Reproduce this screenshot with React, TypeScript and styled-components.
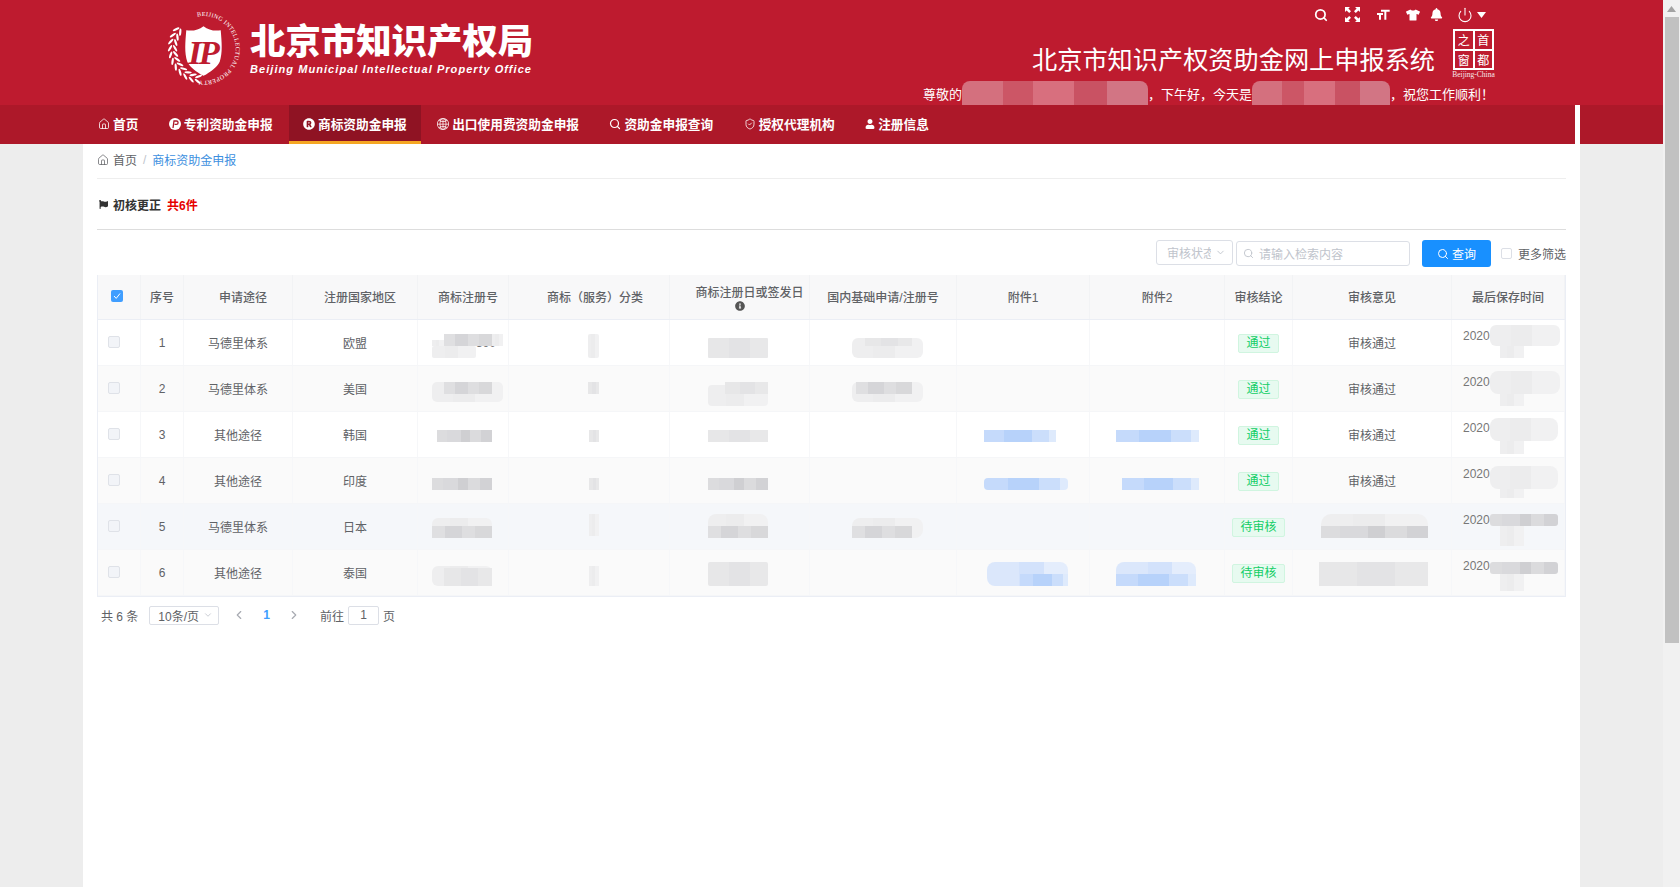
import React from "react";
import styled, { createGlobalStyle, css } from "styled-components";
import { Home, Search, ShieldCheck, Power, ChevronDown, ChevronLeft, ChevronRight } from "lucide-react";
import { FaRegistered, FaUser, FaTshirt, FaBell, FaFlag, FaInfoCircle } from "react-icons/fa";
import { MdFormatSize } from "react-icons/md";
import { BsGlobe2 } from "react-icons/bs";

const RED = "#be1b2f";
const NAV_RED = "#ad1829";
const SANS = `"Liberation Sans", "Noto Sans CJK SC", sans-serif`;

const GlobalStyle = createGlobalStyle`
  html, body {
    margin: 0;
    padding: 0;
    overflow: hidden;
    background: #ededed;
    font-family: ${SANS};
  }
`;

const Screen = styled.div`
  display: flex;
  width: 1680px;
  height: 887px;
  overflow: hidden;
`;

const Page = styled.div`
  flex: 1;
  display: flex;
  flex-direction: column;
  min-width: 0;
`;

const ScrollTrack = styled.div`
  width: 17px;
  display: flex;
  flex-direction: column;
  background: #f1f1f1;
`;

const ScrollArrow = styled.div`
  height: 17px;
  display: flex;
  align-items: center;
  justify-content: center;
`;

const ScrollThumb = styled.div`
  height: 626px;
  margin: 0 1px 0 2px;
  background: #c1c1c1;
`;

const TopBar = styled.header`
  height: 105px;
  flex: none;
  background: ${RED};
  display: flex;
  justify-content: space-between;
  overflow: hidden;
  color: #fff;
  padding: 0 166px;
`;

const Brand = styled.div`
  display: flex;
  gap: 9px;
  padding-top: 11px;
`;

const BrandText = styled.div`
  width: 284px;
  display: flex;
  flex-direction: column;
  padding-top: 9px;
`;

const BrandTitle = styled.div`
  font-family: "Noto Sans CJK SC", sans-serif;
  font-size: 35.4px;
  font-weight: 900;
  line-height: 38px;
  white-space: nowrap;
`;

const BrandSub = styled.div`
  font-size: 11px;
  font-weight: 700;
  font-style: italic;
  letter-spacing: 1.06px;
  line-height: 14px;
  margin-top: 4px;
  white-space: nowrap;
`;

const TopRight = styled.div`
  display: flex;
  flex-direction: column;
  align-items: flex-end;
`;

const ToolIcons = styled.div`
  height: 29px;
  display: flex;
  align-items: center;
  gap: 15px;
  padding-right: 11px;
`;

const ToolSlot = styled.span<{ $w: number; $nudge?: number }>`
  width: ${(p) => p.$w}px;
  margin-left: ${(p) => p.$nudge ?? 0}px;
  display: flex;
  justify-content: center;
`;

const SystemRow = styled.div`
  height: 52px;
  display: flex;
  gap: 16px;
`;

const SystemTitle = styled.div`
  font-family: "Noto Sans CJK SC", sans-serif;
  font-size: 25.2px;
  font-weight: 400;
  line-height: 58px;
  white-space: nowrap;
`;

const SealColumn = styled.div`
  width: 45px;
  display: flex;
  flex-direction: column;
  align-items: center;
  margin-right: 1px;
`;

const Seal = styled.div`
  width: 41px;
  height: 41px;
  box-sizing: border-box;
  border: 2px solid #fff;
  display: grid;
  grid-template-columns: 1fr 1fr;
  grid-template-rows: 1fr 1fr;
  gap: 2px;
  background: #fff;
`;

const SealCell = styled.span`
  background: ${RED};
  font-family: "Noto Sans CJK SC", sans-serif;
  font-size: 12px;
  line-height: 17px;
  text-align: center;
  overflow: hidden;
`;

const SealCaption = styled.div`
  font-family: "Liberation Serif", serif;
  font-size: 7.5px;
  line-height: 10px;
  white-space: nowrap;
  opacity: 0.9;
`;

const Greeting = styled.div`
  height: 24px;
  margin-right: 3px;
  font-family: "Noto Sans CJK SC", sans-serif;
  font-size: 13px;
  line-height: 26px;
  display: flex;
  white-space: nowrap;
`;

const GreetBlur = styled.span<{ $w: number }>`
  width: ${(p) => p.$w}px;
  height: 24px;
  flex: none;
  border-radius: 8px 8px 0 0;
  background: linear-gradient(
    90deg,
    #d4707e 0 22%,
    #cc5666 22% 38%,
    #d86f7e 38% 60%,
    #c95263 60% 78%,
    #d27584 78%
  );
`;

const NavBar = styled.nav`
  height: 39px;
  flex: none;
  display: flex;
`;

const NavStrip = styled.div`
  flex: 1;
  background: ${NAV_RED};
  display: flex;
  gap: 2.4px;
  padding-left: 84px;
`;

const NavGap = styled.div`
  width: 5px;
  background: #fff;
`;

const NavTail = styled.div`
  width: 83px;
  background: ${NAV_RED};
`;

const NavItem = styled.a<{ $active?: boolean }>`
  box-sizing: border-box;
  height: 39px;
  display: flex;
  align-items: center;
  gap: 3px;
  padding: 0 14px 2px;
  color: #fff;
  font-family: "Noto Sans CJK SC", sans-serif;
  font-size: 12.7px;
  font-weight: 700;
  white-space: nowrap;
  ${(p) =>
    p.$active &&
    css`
      background: #8f1323;
      border-bottom: 3px solid #f5a623;
      padding-top: 1px;
      padding-bottom: 0;
    `}
`;

const Body = styled.div`
  flex: 1;
  display: flex;
  min-height: 0;
`;

const Gutter = styled.div`
  width: 83px;
  flex: none;
  background: #ededed;
`;

const Content = styled.main`
  flex: 1;
  background: #fff;
  padding: 0 14px;
  min-width: 0;
`;

const Breadcrumb = styled.div`
  height: 35px;
  box-sizing: border-box;
  border-bottom: 1px solid #eeeeee;
  display: flex;
  align-items: center;
  font-size: 12px;
  color: #606266;
  padding-bottom: 3px;
`;

const CrumbHome = styled.span`
  display: flex;
  align-items: center;
  gap: 4px;
`;

const CrumbSep = styled.span`
  margin: 0 6px;
  color: #c0c4cc;
`;

const CrumbLink = styled.span`
  color: #3d8fe0;
`;

const SectionHead = styled.div`
  height: 51px;
  box-sizing: border-box;
  border-bottom: 1px solid #dddddd;
  display: flex;
  align-items: center;
  gap: 5px;
  font-size: 12px;
  padding: 1px 0 0 2px;
  color: #333;
`;

const SectionName = styled.span`
  font-weight: 700;
`;

const SectionCount = styled.span`
  color: #e60000;
  font-weight: 700;
  margin-left: 1px;
`;

const Toolbar = styled.div`
  height: 45px;
  box-sizing: border-box;
  padding-top: 10px;
  display: flex;
  justify-content: flex-end;
  align-items: flex-start;
`;

const SelectBox = styled.div`
  box-sizing: border-box;
  width: 77px;
  height: 25px;
  border: 1px solid #dcdfe6;
  border-radius: 3px;
  display: flex;
  align-items: center;
  padding: 0 6px 0 10px;
  color: #c0c4cc;
  font-size: 12px;
  gap: 4px;
`;

const SelectText = styled.span`
  width: 44px;
  overflow: hidden;
  white-space: nowrap;
`;

const SearchBox = styled.div`
  box-sizing: border-box;
  width: 174px;
  height: 25px;
  margin: 1px 12px 0 3px;
  border: 1px solid #dcdfe6;
  border-radius: 3px;
  display: flex;
  align-items: center;
  gap: 5px;
  padding-left: 6px;
  color: #c0c4cc;
  font-size: 12px;
`;

const QueryButton = styled.button`
  box-sizing: border-box;
  width: 69px;
  height: 27px;
  border: 0;
  border-radius: 3px;
  background: #1890ff;
  color: #fff;
  font-family: ${SANS};
  font-size: 12px;
  display: flex;
  align-items: center;
  justify-content: center;
  gap: 3px;
  padding: 0;
`;

const FilterToggle = styled.label`
  margin-left: 10px;
  height: 27px;
  display: flex;
  align-items: center;
  gap: 6px;
  font-size: 12px;
  color: #606266;
  white-space: nowrap;
`;

const Box = styled.span`
  box-sizing: border-box;
  width: 11px;
  height: 11px;
  border: 1px solid #dcdfe6;
  border-radius: 2px;
  display: block;
`;

const TableWrap = styled.div`
  border-left: 1px solid #ebeef5;
  border-right: 1px solid #ebeef5;
  border-bottom: 1px solid #ebeef5;
  box-sizing: border-box;
  margin: 0;
`;

const COLS = "43px 43px 109px 125px 91px 161px 140px 147px 133px 135px 68px 159px 113px";

const HeadRow = styled.div`
  display: grid;
  grid-template-columns: ${COLS};
  height: 45px;
  box-sizing: border-box;
  background: #f8f8f9;
  border-bottom: 1px solid #ebeef5;
  color: #606266;
  font-size: 12px;
  font-weight: 500;
`;

const HeadCell = styled.div<{ $shift?: number }>`
  display: flex;
  flex-direction: column;
  align-items: center;
  justify-content: center;
  border-right: 1px solid #f2f3f5;
  padding-top: 3px;
  padding-left: ${(p) => p.$shift ?? 0}px;
  line-height: 15px;
  white-space: nowrap;
`;

const HeadLine = styled.span`
  margin-left: 20px;
`;

const Row = styled.div<{ $bg: string }>`
  position: relative;
  display: grid;
  grid-template-columns: ${COLS};
  height: 46px;
  background: ${(p) => p.$bg};
  border-bottom: 1px solid #f5f6f8;
  box-sizing: border-box;
  color: #606266;
  font-size: 12px;
`;

const Cell = styled.div`
  display: flex;
  align-items: center;
  justify-content: center;
  border-right: 1px solid #f6f7f9;
  white-space: nowrap;
`;

const CheckCell = styled(Cell)`
  padding: 0 10px 2px 0;
`;

const Disabled = styled(Box)`
  width: 12px;
  height: 12px;
  background: #f2f4f8;
  border-color: #dfe2e8;
`;

const Checked = styled.span`
  box-sizing: border-box;
  width: 12px;
  height: 12px;
  margin-top: -5px;
  margin-right: 4px;
  border-radius: 2px;
  background: #409eff;
  display: flex;
  align-items: center;
  justify-content: center;
`;

const NumberTail = styled(Cell)`
  justify-content: flex-end;
  padding-right: 12px;
  color: #777;
`;

const TimeCell = styled(Cell)`
  justify-content: flex-start;
  align-items: flex-start;
  padding: 8px 0 0 11px;
  line-height: 17px;
  color: #777;
`;

const Tag = styled.span`
  box-sizing: border-box;
  height: 19px;
  line-height: 17px;
  margin-top: 1px;
  padding: 0 7px;
  border: 1px solid #d0f5e0;
  border-radius: 2px;
  background: #e7faf0;
  color: #13ce66;
`;

const TONES: Record<string, string> = {
  grey: "linear-gradient(90deg,#dfdfe1 0 22%,#d5d5d8 22% 50%,#dedee0 50% 72%,#d8d8da 72%)",
  dark: "linear-gradient(90deg,#dcdcde 0 18%,#d9d9dc 18% 44%,#cfcfd2 44% 60%,#dbdbdd 60% 80%,#d2d2d5 80%)",
  soft: "linear-gradient(90deg,#e7e7e8 0 35%,#e3e3e5 35% 70%,#e8e8e9 70%)",
  pale: "linear-gradient(90deg,#eeeeef 0 30%,#ececed 30% 60%,#f1f1f2 60%)",
  blue: "linear-gradient(90deg,#c5dafb 0 28%,#b7d2fa 28% 66%,#cbdefb 66% 90%,#deeafc 90%)",
  sky: "linear-gradient(90deg,#dbe7fb 0 40%,#d3e2fb 40% 70%,#e4edfc 70%)",
};

// mosaic patches laid over the redacted values
const Smudge = styled.span<{ $x: number; $y: number; $w: number; $h: number; $tone: string; $round?: number }>`
  position: absolute;
  left: ${(p) => p.$x}px;
  top: ${(p) => p.$y}px;
  width: ${(p) => p.$w}px;
  height: ${(p) => p.$h}px;
  background: ${(p) => TONES[p.$tone]};
  border-radius: ${(p) => p.$round ?? 2}px;
`;

const Pager = styled.div`
  height: 20px;
  margin-top: 8px;
  padding-left: 4px;
  display: flex;
  align-items: center;
  font-size: 12px;
  color: #606266;
`;

const PageSize = styled.div`
  box-sizing: border-box;
  width: 70px;
  height: 19px;
  margin-left: 11px;
  border: 1px solid #dcdfe6;
  border-radius: 2px;
  display: flex;
  align-items: center;
  justify-content: space-between;
  padding: 0 5px 0 8px;
`;

const PageArrow = styled.span<{ $gap: number }>`
  display: flex;
  margin-left: ${(p) => p.$gap}px;
`;

const PageNo = styled.span`
  color: #409eff;
  font-weight: 700;
  margin-left: 17px;
`;

const Jump = styled.div`
  box-sizing: border-box;
  width: 31px;
  height: 19px;
  margin: 0 4px 0 4px;
  border: 1px solid #dcdfe6;
  border-radius: 2px;
  text-align: center;
  line-height: 17px;
`;

const JumpLabel = styled.span`
  margin-left: 19px;
`;

const NAV = [
  { label: "首页", icon: <Home size={12} strokeWidth={1.6} /> },
  { label: "专利资助金申报", icon: <PatentMark /> },
  { label: "商标资助金申报", icon: <FaRegistered size={12} />, active: true },
  { label: "出口使用费资助金申报", icon: <BsGlobe2 size={12} /> },
  { label: "资助金申报查询", icon: <Search size={12} strokeWidth={2.4} /> },
  { label: "授权代理机构", icon: <ShieldCheck size={12} strokeWidth={1.6} /> },
  { label: "注册信息", icon: <FaUser size={10} /> },
];

const HEADERS: { label: string; shift?: number }[] = [
  { label: "序号" },
  { label: "申请途径", shift: 10 },
  { label: "注册国家地区", shift: 10 },
  { label: "商标注册号", shift: 10 },
  { label: "商标（服务）分类", shift: 12 },
];

const HEADERS_TAIL = ["国内基础申请/注册号", "附件1", "附件2", "审核结论", "审核意见", "最后保存时间"];

type Patch = [number, number, number, number, string, number?];

const ROWS: {
  no: number;
  route: string;
  region: string;
  tail?: string;
  tag: string;
  opinion?: string;
  time: string;
  bg: string;
  patches: Patch[];
}[] = [
  {
    no: 1,
    route: "马德里体系",
    region: "欧盟",
    tail: "390",
    tag: "通过",
    opinion: "审核通过",
    time: "2020",
    bg: "#ffffff",
    patches: [
      [432, 345, 476, 357, "pale"],
      [432, 339, 444, 345, "pale", 0],
      [444, 333, 492, 345, "grey", 0],
      [492, 333, 503, 345, "pale", 0],
      [588, 333, 599, 357, "pale"],
      [708, 337, 768, 357, "soft", 1],
      [852, 337, 923, 357, "pale", 6],
      [865, 337, 912, 345, "soft", 0],
      [1490, 324, 1560, 345, "pale", 6],
      [1500, 345, 1524, 357, "pale", 0],
    ],
  },
  {
    no: 2,
    route: "马德里体系",
    region: "美国",
    tag: "通过",
    opinion: "审核通过",
    time: "2020-",
    bg: "#fafafa",
    patches: [
      [432, 381, 503, 401, "pale", 5],
      [444, 381, 492, 393, "grey", 0],
      [588, 381, 599, 393, "soft", 0],
      [708, 384, 768, 405, "pale", 4],
      [725, 381, 768, 393, "soft", 0],
      [852, 381, 923, 401, "pale", 6],
      [856, 381, 912, 393, "grey", 0],
      [1490, 370, 1560, 393, "pale", 8],
      [1500, 393, 1524, 405, "pale", 0],
    ],
  },
  {
    no: 3,
    route: "其他途径",
    region: "韩国",
    tag: "通过",
    opinion: "审核通过",
    time: "2020-",
    bg: "#ffffff",
    patches: [
      [437, 429, 492, 441, "dark", 0],
      [589, 429, 599, 441, "soft", 0],
      [708, 429, 768, 441, "soft", 0],
      [984, 429, 1056, 441, "blue", 0],
      [1116, 429, 1199, 441, "blue", 0],
      [1490, 417, 1558, 440, "pale", 8],
      [1500, 440, 1524, 453, "pale", 0],
    ],
  },
  {
    no: 4,
    route: "其他途径",
    region: "印度",
    tag: "通过",
    opinion: "审核通过",
    time: "2020",
    bg: "#fafafa",
    patches: [
      [432, 477, 492, 489, "dark", 0],
      [589, 477, 599, 489, "soft", 0],
      [708, 477, 768, 489, "dark", 0],
      [984, 477, 1068, 489, "blue", 4],
      [1122, 477, 1199, 489, "blue", 0],
      [1490, 465, 1558, 488, "pale", 8],
      [1500, 488, 1524, 497, "pale", 0],
    ],
  },
  {
    no: 5,
    route: "马德里体系",
    region: "日本",
    tag: "待审核",
    time: "2020-",
    bg: "#f5f7fa",
    patches: [
      [432, 517, 492, 537, "pale", 6],
      [432, 525, 492, 537, "grey", 0],
      [589, 513, 599, 535, "pale", 0],
      [708, 513, 768, 537, "pale", 8],
      [708, 525, 768, 537, "grey", 0],
      [852, 517, 923, 537, "pale", 8],
      [852, 525, 912, 537, "grey", 0],
      [1321, 513, 1428, 537, "pale", 10],
      [1321, 525, 1428, 537, "dark", 0],
      [1490, 513, 1558, 525, "dark", 3],
      [1500, 525, 1524, 545, "pale", 0],
    ],
  },
  {
    no: 6,
    route: "其他途径",
    region: "泰国",
    tag: "待审核",
    time: "2020-",
    bg: "#fafafa",
    patches: [
      [432, 565, 492, 585, "pale", 6],
      [444, 567, 492, 585, "soft", 0],
      [589, 565, 599, 585, "pale", 0],
      [708, 561, 768, 585, "soft", 2],
      [987, 561, 1068, 585, "sky", 8],
      [1020, 573, 1068, 585, "blue", 0],
      [1116, 561, 1196, 585, "sky", 8],
      [1116, 573, 1196, 585, "blue", 0],
      [1319, 561, 1428, 585, "soft", 0],
      [1490, 561, 1558, 573, "dark", 3],
      [1500, 573, 1524, 590, "pale", 0],
    ],
  },
];

const ROW_TOP = 319;
const TABLE_LEFT = 98;

function PatentMark() {
  return (
    <svg width="12" height="12" viewBox="0 0 12 12">
      <circle cx="6" cy="6" r="6" fill="#fff" />
      <path d="M4 10 5 3h2.4a1.7 1.7 0 0 1 0 3.4H5.6" fill="none" stroke={NAV_RED} strokeWidth="1.3" />
    </svg>
  );
}

function ExpandMark() {
  const arrow = "M0 0h5L3.4 1.6 6 4.2 4.2 6 1.6 3.4 0 5z";
  return (
    <svg width="15" height="15" viewBox="0 0 15 15" fill="#fff">
      <path d={arrow} />
      <path d={arrow} transform="rotate(90 7.5 7.5)" />
      <path d={arrow} transform="rotate(180 7.5 7.5)" />
      <path d={arrow} transform="rotate(270 7.5 7.5)" />
    </svg>
  );
}

function Emblem() {
  const leaves = Array.from({ length: 22 }, (_, i) => {
    const deg = 100 + Math.floor(i / 2) * 11.5;
    const rad = (deg * Math.PI) / 180;
    const outer = i % 2 === 0;
    const radius = outer ? 33 : 28;
    return {
      x: 37 + radius * Math.cos(rad),
      y: 37 + radius * Math.sin(rad),
      r: deg + (outer ? 120 : 60),
    };
  });
  return (
    <svg width="75" height="75" viewBox="0 0 74 74">
      <defs>
        <path id="ring" d="M 31 5.5 A 32 32 0 1 1 29 68" fill="none" />
      </defs>
      <text fontFamily="Liberation Serif, serif" fontSize="6" fill="#fff" letterSpacing="0.35">
        <textPath href="#ring">BEIJING INTELLECTUAL PROPERTY</textPath>
      </text>
      {leaves.map((l, i) => (
        <ellipse key={i} cx={l.x} cy={l.y} rx="3.6" ry="1.1" fill="#fff" transform={`rotate(${l.r} ${l.x} ${l.y})`} />
      ))}
      <path
        d="M37 15c5 4 11 5 17 4 1 12 2 22-1 31-3 6-9 10-16 14-7-4-13-8-16-14-3-9-2-19-1-31 6 1 12 0 17-4z"
        fill="#fff"
      />
      <text
        x="36"
        y="52"
        textAnchor="middle"
        fontFamily="Liberation Serif, serif"
        fontSize="34"
        fontStyle="italic"
        fontWeight="700"
        letterSpacing="-3"
        fill={RED}
      >
        IP
      </text>
    </svg>
  );
}

export default function App() {
  return (
    <Screen>
      <GlobalStyle />
      <Page>
        <TopBar>
          <Brand>
            <Emblem />
            <BrandText>
              <BrandTitle>北京市知识产权局</BrandTitle>
              <BrandSub>Beijing Municipal Intellectual Property Office</BrandSub>
            </BrandText>
          </Brand>
          <TopRight>
            <ToolIcons>
              <ToolSlot $w={16}>
                <Search size={14} strokeWidth={3} />
              </ToolSlot>
              <ToolSlot $w={16}>
                <ExpandMark />
              </ToolSlot>
              <ToolSlot $w={16}>
                <MdFormatSize size={20} />
              </ToolSlot>
              <ToolSlot $w={14}>
                <FaTshirt size={14} />
              </ToolSlot>
              <ToolSlot $w={13} $nudge={-5}>
                <FaBell size={13} />
              </ToolSlot>
              <ToolSlot $w={16} $nudge={-1}>
                <Power size={16} strokeWidth={1.6} />
              </ToolSlot>
              <svg width="9" height="6" viewBox="0 0 9 6" style={{ marginLeft: -11 }}>
                <path d="M0 0h9L4.5 6z" fill="#fff" />
              </svg>
            </ToolIcons>
            <SystemRow>
              <SystemTitle>北京市知识产权资助金网上申报系统</SystemTitle>
              <SealColumn>
                <Seal>
                  <SealCell>之</SealCell>
                  <SealCell>首</SealCell>
                  <SealCell>窗</SealCell>
                  <SealCell>都</SealCell>
                </Seal>
                <SealCaption>Beijing-China</SealCaption>
              </SealColumn>
            </SystemRow>
            <Greeting>
              尊敬的
              <GreetBlur $w={186} />
              ，下午好，今天是
              <GreetBlur $w={138} />
              ，祝您工作顺利！
            </Greeting>
          </TopRight>
        </TopBar>
        <NavBar>
          <NavStrip>
            {NAV.map((n) => (
              <NavItem key={n.label} $active={n.active}>
                {n.icon}
                {n.label}
              </NavItem>
            ))}
          </NavStrip>
          <NavGap />
          <NavTail />
        </NavBar>
        <Body>
          <Gutter />
          <Content>
            <Breadcrumb>
              <CrumbHome>
                <Home size={12} strokeWidth={1.5} />
                首页
              </CrumbHome>
              <CrumbSep>/</CrumbSep>
              <CrumbLink>商标资助金申报</CrumbLink>
            </Breadcrumb>
            <SectionHead>
              <FaFlag size={9} color="#333" />
              <SectionName>初核更正</SectionName>
              <SectionCount>共6件</SectionCount>
            </SectionHead>
            <Toolbar>
              <SelectBox>
                <SelectText>审核状态</SelectText>
                <ChevronDown size={11} />
              </SelectBox>
              <SearchBox>
                <Search size={11} />
                请输入检索内容
              </SearchBox>
              <QueryButton>
                <Search size={12} />
                查询
              </QueryButton>
              <FilterToggle>
                <Box />
                更多筛选
              </FilterToggle>
            </Toolbar>
            <TableWrap>
              <HeadRow>
                <HeadCell>
                  <Checked>
                    <svg width="8" height="8" viewBox="0 0 8 8">
                      <path d="M1 4l2.2 2.4L7 1.5" fill="none" stroke="#fff" strokeWidth="1" />
                    </svg>
                  </Checked>
                </HeadCell>
                {HEADERS.map((h) => (
                  <HeadCell key={h.label} $shift={h.shift}>
                    {h.label}
                  </HeadCell>
                ))}
                <HeadCell>
                  <HeadLine>商标注册日或签发日</HeadLine>
                  <FaInfoCircle size={10} color="#555" />
                </HeadCell>
                {HEADERS_TAIL.map((h) => (
                  <HeadCell key={h}>{h}</HeadCell>
                ))}
              </HeadRow>
              {ROWS.map((r, i) => (
                <Row key={r.no} $bg={r.bg}>
                  <CheckCell>
                    <Disabled />
                  </CheckCell>
                  <Cell>{r.no}</Cell>
                  <Cell>{r.route}</Cell>
                  <Cell>{r.region}</Cell>
                  <NumberTail>{r.tail}</NumberTail>
                  <Cell />
                  <Cell />
                  <Cell />
                  <Cell />
                  <Cell />
                  <Cell>
                    <Tag>{r.tag}</Tag>
                  </Cell>
                  <Cell>{r.opinion}</Cell>
                  <TimeCell>{r.time}</TimeCell>
                  {r.patches.map(([x0, y0, x1, y1, tone, round], k) => (
                    <Smudge
                      key={k}
                      $x={x0 - TABLE_LEFT}
                      $y={y0 - (ROW_TOP + 46 * i)}
                      $w={x1 - x0}
                      $h={y1 - y0}
                      $tone={tone}
                      $round={round}
                    />
                  ))}
                </Row>
              ))}
            </TableWrap>
            <Pager>
              共 6 条
              <PageSize>
                10条/页
                <ChevronDown size={10} color="#c0c4cc" />
              </PageSize>
              <PageArrow $gap={13}>
                <ChevronLeft size={14} color="#a8abb2" />
              </PageArrow>
              <PageNo>1</PageNo>
              <PageArrow $gap={17}>
                <ChevronRight size={14} color="#a8abb2" />
              </PageArrow>
              <JumpLabel>前往</JumpLabel>
              <Jump>1</Jump>页
            </Pager>
          </Content>
          <Gutter />
        </Body>
      </Page>
      <ScrollTrack>
        <ScrollArrow>
          <svg width="9" height="6" viewBox="0 0 9 6">
            <path d="M0 6 4.5 0 9 6z" fill="#a3a3a3" />
          </svg>
        </ScrollArrow>
        <ScrollThumb />
      </ScrollTrack>
    </Screen>
  );
}
